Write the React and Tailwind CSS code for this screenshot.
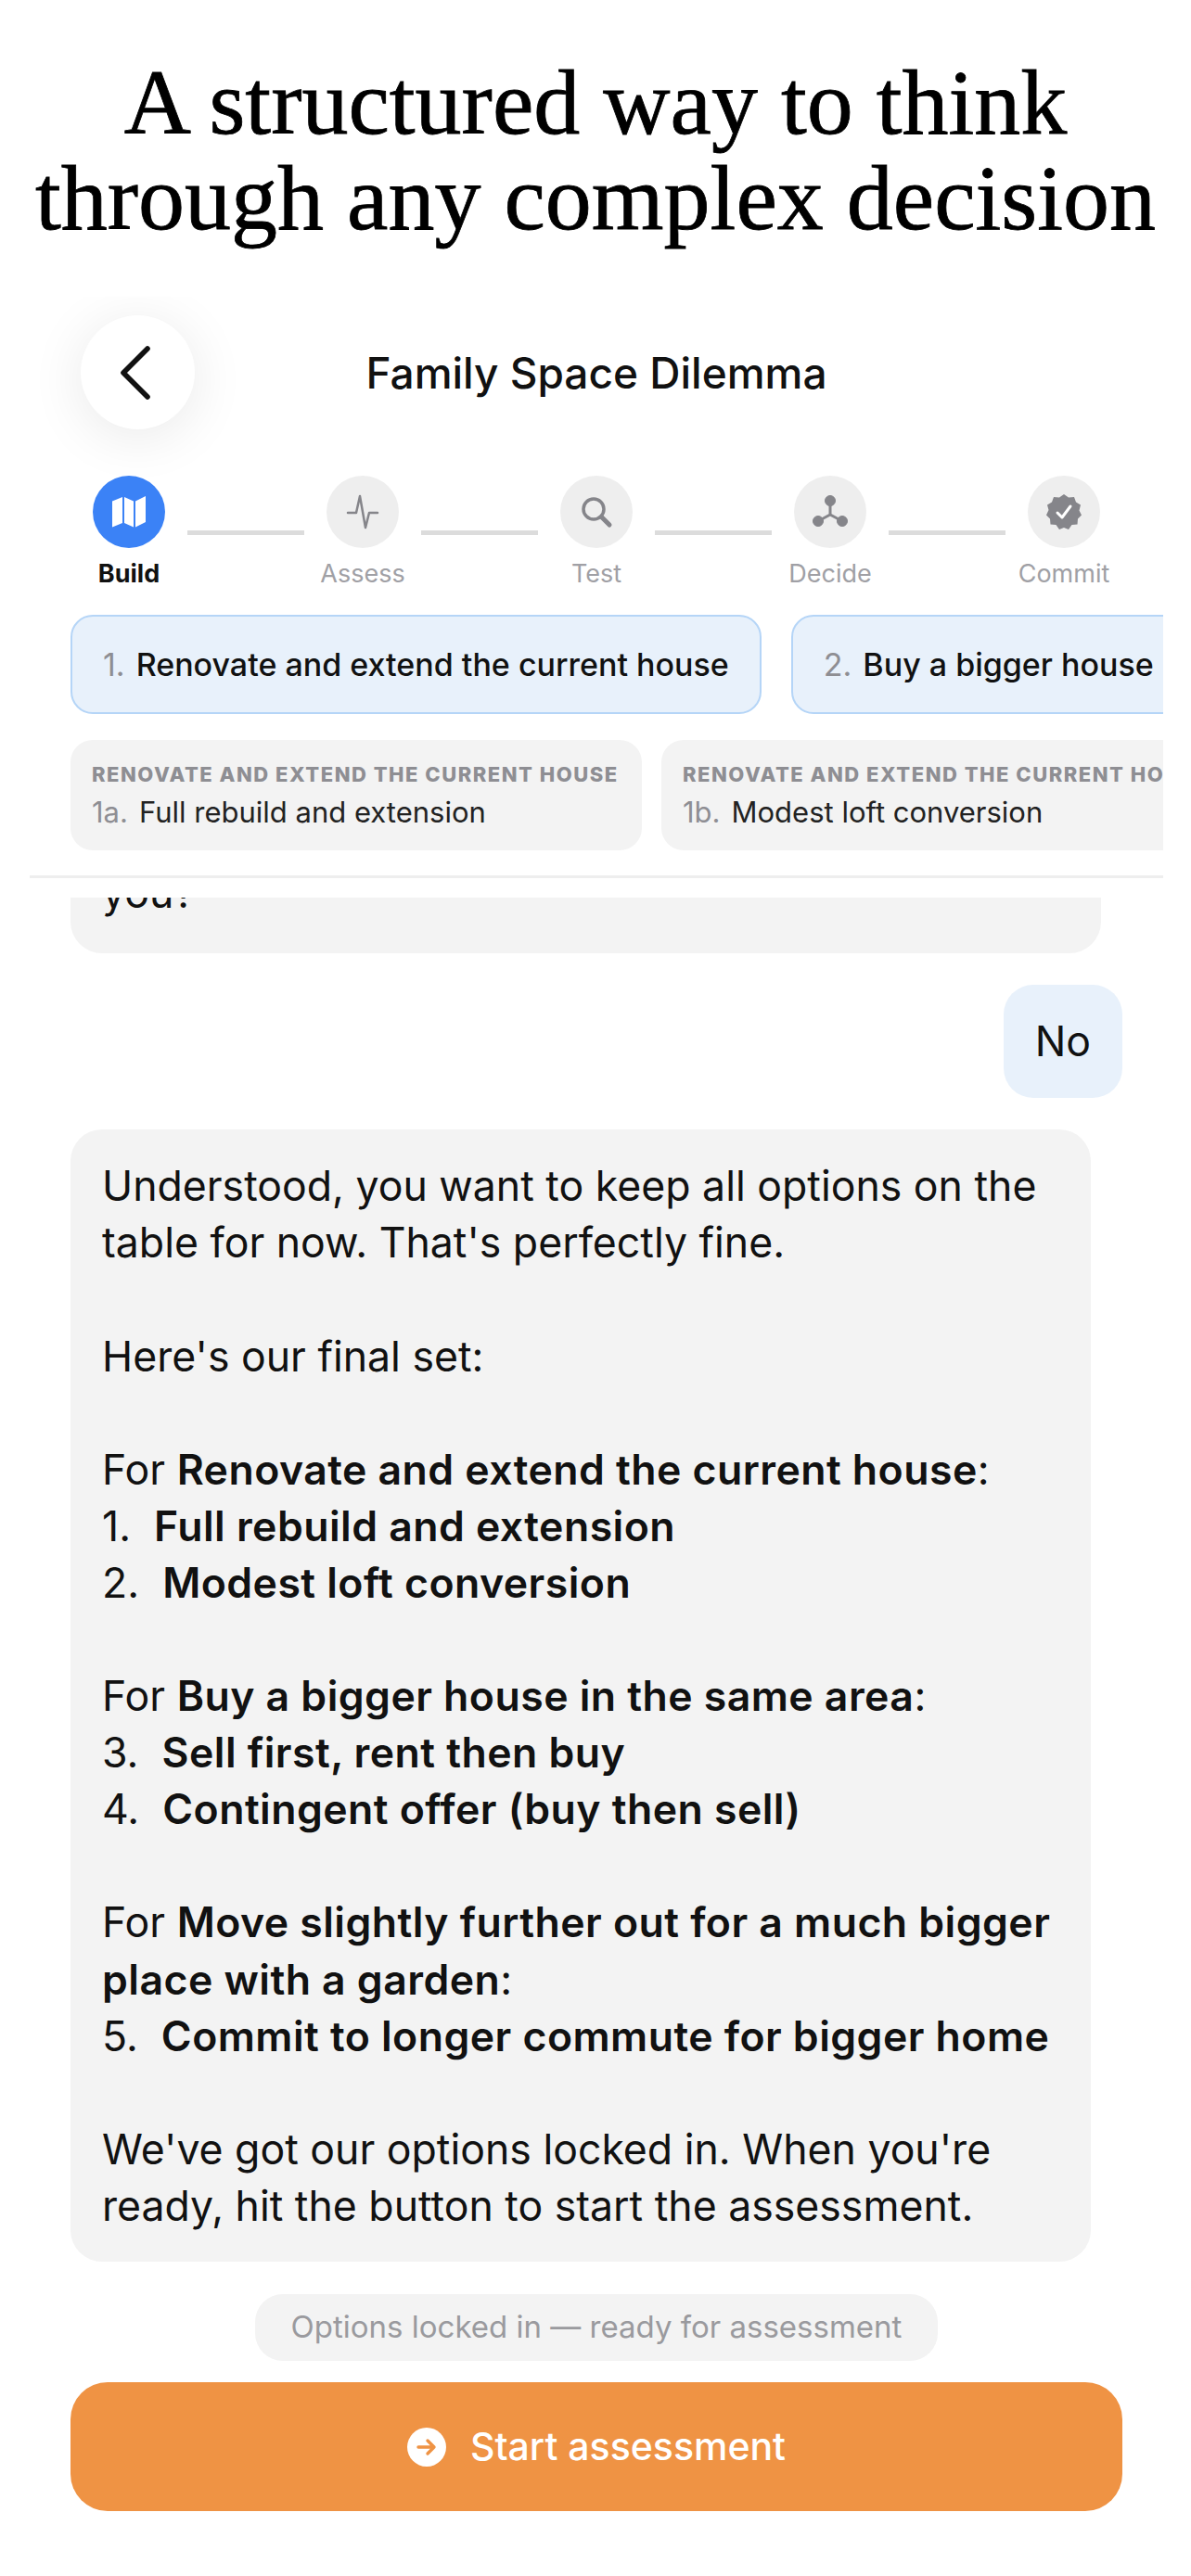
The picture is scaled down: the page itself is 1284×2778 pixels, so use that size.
import React from 'react'
import { ChevronLeft } from 'lucide-react'

const STEPS = [
  { label: 'Build', active: true, icon: <MapGlyph /> },
  { label: 'Assess', icon: <PulseGlyph /> },
  { label: 'Test', icon: <SearchGlyph /> },
  { label: 'Decide', icon: <NodesGlyph /> },
  { label: 'Commit', icon: <BadgeGlyph /> },
]

function MapGlyph() {
  return (
    <svg width="38" height="38" viewBox="0 0 38 38" fill="#fff">
      <path d="M1 7.5 12 3v28L1 35.500z" />
      <path d="M14 3l10 4.500v28L14 31z" />
      <path d="M26 7.500 37 2v28l-11 5.500z" />
    </svg>
  )
}

function PulseGlyph() {
  return (
    <svg width="36" height="40" viewBox="0 0 36 40" fill="none" stroke="#85858a" strokeWidth="2.500" strokeLinejoin="round" strokeLinecap="round">
      <path d="M2 21h9l4-18 6 34 4-16h9" />
    </svg>
  )
}

function SearchGlyph() {
  return (
    <svg width="36" height="36" viewBox="0 0 36 36" fill="none" stroke="#85858a" strokeLinecap="round">
      <circle cx="15" cy="15" r="11" strokeWidth="3.500" />
      <path d="M23.500 23.500 32 32" strokeWidth="5" />
    </svg>
  )
}

function NodesGlyph() {
  return (
    <svg width="38" height="36" viewBox="0 0 38 36" fill="#85858a" stroke="#85858a">
      <path d="M19 6v15M19 21 6 28M19 21l13 7" fill="none" strokeWidth="3" />
      <circle cx="19" cy="6" r="5.500" />
      <circle cx="6" cy="28" r="5.500" />
      <circle cx="32" cy="28" r="5.500" />
    </svg>
  )
}

function BadgeGlyph() {
  return (
    <svg width="38" height="38" viewBox="0 0 38 38">
      <path
        fill="#85858a"
        d="M19 0l5 3.500 6-.5 2 5.500 5 3-1.500 6L38 22.500l-4 4-.5 6-6 .5-3.500 5-5-2-5 2-3.500-5-6-.5-.5-6-4-4 2.500-5.500L1 11.500l5-3L8 3l6 .5z"
      />
      <path d="M12 20l5 5 9-12" fill="none" stroke="#fff" strokeWidth="3" strokeLinecap="round" strokeLinejoin="round" />
    </svg>
  )
}

function Stepper() {
  return (
    <div className="flex items-start pl-[68px]">
      {STEPS.map((s, i) => (
        <React.Fragment key={s.label}>
          <div className="relative w-[78px] shrink-0 flex flex-col items-center">
            <div className={`w-[78px] h-[78px] rounded-full flex items-center justify-center ${s.active ? 'bg-[#3b82f6]' : 'bg-[#eeeeee]'}`}>
              {s.icon}
            </div>
            <span className={`mt-[10px] text-[27px] leading-[36px] whitespace-nowrap ${s.active ? 'font-bold text-[#111]' : 'text-[#a0a0a5]'}`}>
              {s.label}
            </span>
          </div>
          {i < STEPS.length - 1 && (
            <div className="w-[126px] h-[5px] shrink-0 mt-[59px] mx-[24px] bg-[#dcdcdc]" />
          )}
        </React.Fragment>
      ))}
    </div>
  )
}

function OptionChip({ n, text }) {
  return (
    <div className="shrink-0 h-[107px] px-[33px] flex items-center rounded-[24px] bg-[#e8f1fb] border-2 border-[#b5d5f7] text-[34px] whitespace-nowrap">
      <span className="text-[#8e8e93] mr-[12px]">{n}</span>
      <span className="font-medium text-[#111]">{text}</span>
    </div>
  )
}

function SubChip({ n, text }) {
  return (
    <div className="shrink-0 w-[616px] h-[119px] px-[23px] pt-[22px] rounded-[24px] bg-[#f3f3f3] overflow-hidden">
      <div className="text-[22px] leading-[30px] font-extrabold tracking-[1.5px] text-[#8e8e93] whitespace-nowrap">
        RENOVATE AND EXTEND THE CURRENT HOUSE
      </div>
      <div className="mt-[6px] text-[31px] leading-[40px] whitespace-nowrap text-[#222]">
        <span className="text-[#8e8e93] mr-[12px]">{n}</span>
        {text}
      </div>
    </div>
  )
}

// Bold runs in the assistant message
function B({ children }) {
  return <b className="font-semibold tracking-[0.45px]">{children}</b>
}

export default function App() {
  return (
    <div className="w-[1284px] h-[2778px] bg-white flex flex-col overflow-hidden font-['Inter',sans-serif] text-[#111]">
      <h1 className="h-[320px] pt-[59px] text-center font-['Liberation_Serif',serif] text-[100px] leading-[103px] text-black [-webkit-text-stroke:0.8px_black]">
        A structured way to think
        <br />
        through any complex decision
      </h1>

      <div className="flex-1 min-h-0 ml-[32px] mr-[30px] flex flex-col overflow-hidden">
        <header className="relative h-[193px] shrink-0">
          <button className="absolute left-[55px] top-[20px] w-[123px] h-[123px] rounded-full bg-white shadow-[0_8px_60px_rgba(0,0,0,0.09)] flex items-center justify-center">
            <ChevronLeft size={104} strokeWidth={1.3} color="#111" className="mr-[6px]" />
          </button>
          <div className="pt-[50px] text-center text-[46px] leading-[64px] font-medium">Family Space Dilemma</div>
        </header>

        <Stepper />

        <div className="mt-[26px] flex gap-[32px] pl-[44px] overflow-hidden">
          <OptionChip n="1." text="Renovate and extend the current house" />
          <OptionChip n="2." text="Buy a bigger house in the same area" />
        </div>

        <div className="mt-[28px] flex gap-[21px] pl-[44px] overflow-hidden">
          <SubChip n="1a." text="Full rebuild and extension" />
          <SubChip n="1b." text="Modest loft conversion" />
        </div>

        <div className="mt-[27px] h-[3px] bg-[#eeeeee] shrink-0" />

        <div className="mt-[21px] flex-1 min-h-0 overflow-hidden flex flex-col justify-end pl-[44px] pr-[44px] pb-[70px]">
          <div className="shrink-0 w-[1111px] rounded-[34px] bg-[#f3f3f3] px-[34px] pt-[24px] pb-[34px] text-[44.600px] leading-[61.100px]">
            you?
          </div>

          <div className="shrink-0 self-end mt-[34px] h-[122px] px-[34px] flex items-center rounded-[32px] bg-[#e8f1fb] text-[44.600px]">
            No
          </div>

          <div className="shrink-0 w-[1100px] mt-[34px] rounded-[34px] bg-[#f3f3f3] px-[34px] pt-[31px] pb-[29px] text-[44.600px] leading-[61.100px]">
            <p>Understood, you want to keep all options on the<br />table for now. That's perfectly fine.</p>
            <p className="mt-[61.100px]">Here's our final set:</p>
            <p className="mt-[61.100px]">For <B>Renovate and extend the current house</B>:</p>
            <p>1.&nbsp; <B>Full rebuild and extension</B></p>
            <p>2.&nbsp; <B>Modest loft conversion</B></p>
            <p className="mt-[61.100px]">For <B>Buy a bigger house in the same area</B>:</p>
            <p>3.&nbsp; <B>Sell first, rent then buy</B></p>
            <p>4.&nbsp; <B>Contingent offer (buy then sell)</B></p>
            <p className="mt-[61.100px]">For <B>Move slightly further out for a much bigger<br />place with a garden</B>:</p>
            <p>5.&nbsp; <B>Commit to longer commute for bigger home</B></p>
            <p className="mt-[61.100px]">We've got our options locked in. When you're<br />ready, hit the button to start the assessment.</p>
          </div>

          <div className="shrink-0 self-center mt-[35px] h-[72px] px-[39px] flex items-center rounded-[30px] bg-[#f3f3f3] text-[33px] text-[#9a9a9e] whitespace-nowrap">
            Options locked in — ready for assessment
          </div>

          <button className="shrink-0 mt-[23px] h-[139px] rounded-[40px] bg-[#ef9344] flex items-center justify-center gap-[26px] text-white text-[41px] font-medium">
            <span className="w-[42px] h-[42px] rounded-full bg-white flex items-center justify-center">
              <svg width="26" height="26" viewBox="0 0 26 26" fill="none" stroke="#ef9344" strokeWidth="3.400" strokeLinecap="round" strokeLinejoin="round">
                <path d="M4 13h17M14 6l7 7-7 7" />
              </svg>
            </span>
            Start assessment
          </button>
        </div>
      </div>
    </div>
  )
}
